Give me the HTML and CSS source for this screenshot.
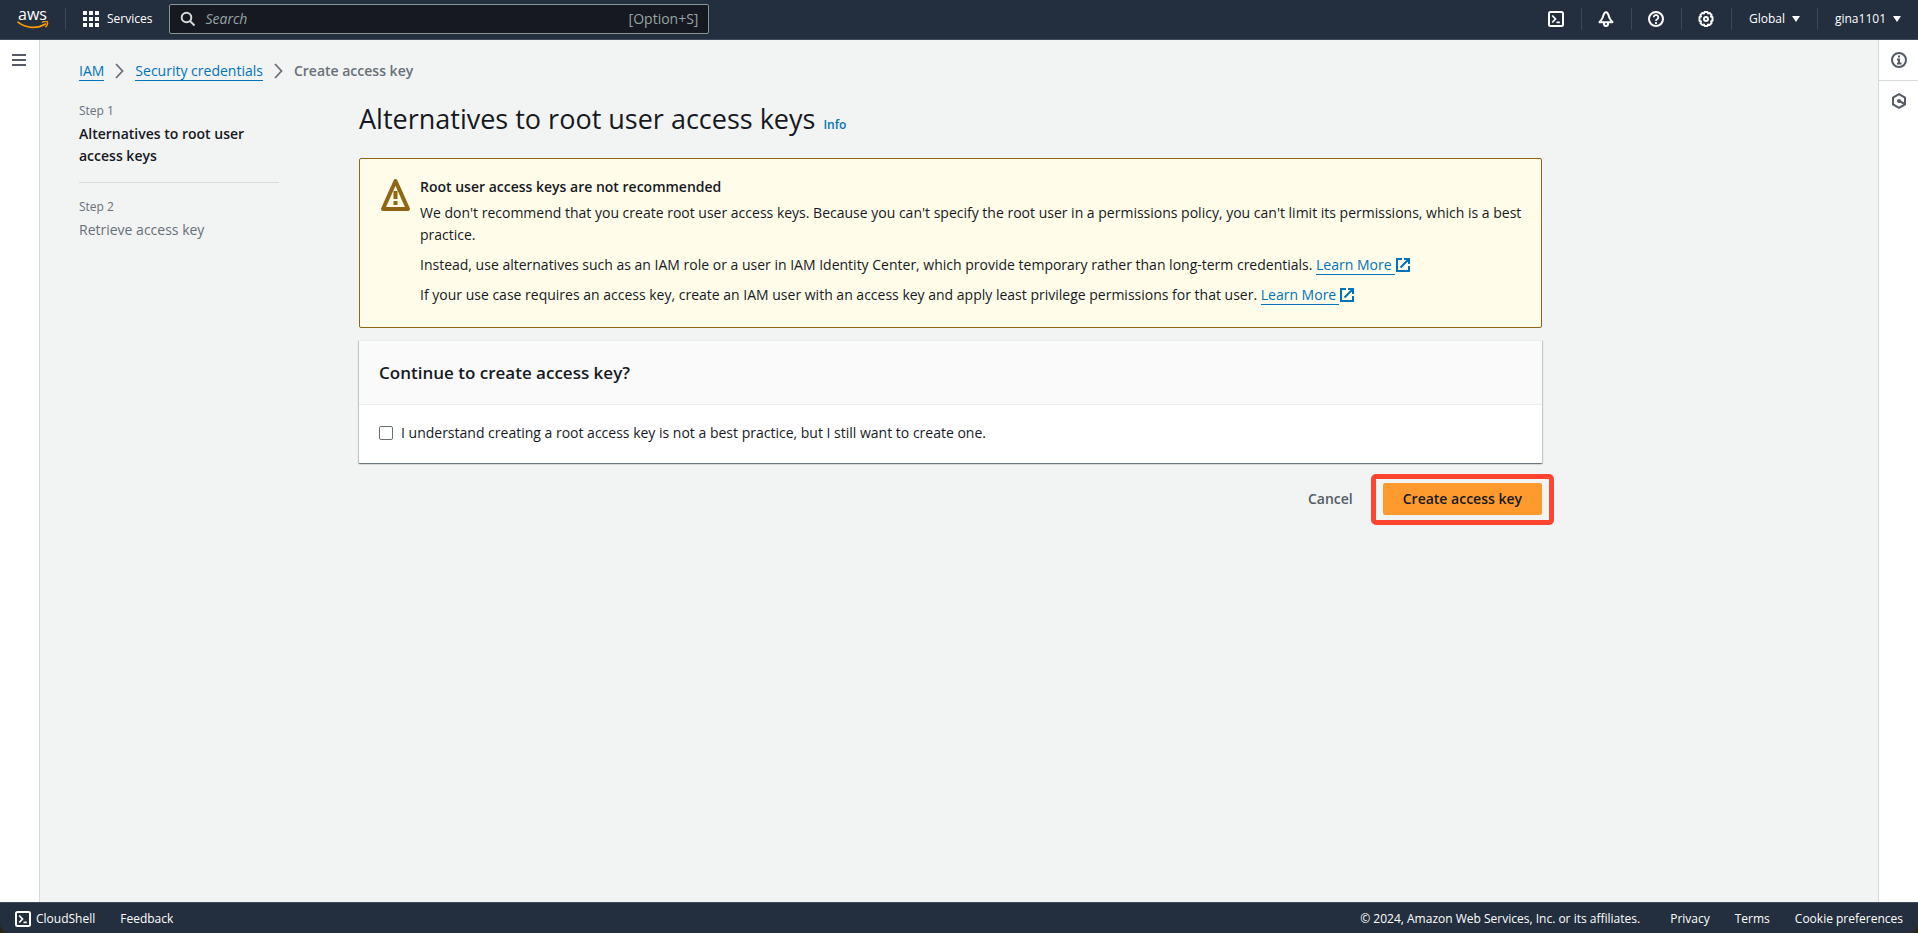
FILE: index.html
```html
<!DOCTYPE html>
<html lang="en">
<head>
<meta charset="utf-8">
<title>Create access key | IAM | Global</title>
<link rel="stylesheet" href="styles.css">
</head>
<body>
<header class="topbar">
  <a class="logo" href="#" aria-label="AWS home">
    <span class="logo-word">aws</span>
    <svg class="logo-smile" width="32" height="8" viewBox="0 0 32 8" fill="none" stroke="#ff9900" stroke-width="1.7" stroke-linecap="round"><path d="M1 1.2C9 7.6 20 8 28.6 3"/><path d="M25.4 1.2c2-.7 4.6-.9 5 0 .4.8-.2 3-1.6 4.6" stroke-width="1.4"/></svg>
  </a>
  <button class="services" type="button">
    <svg width="16" height="16" viewBox="0 0 16 16" fill="#fff"><path d="M0 0h4v4H0zM6 0h4v4H6zM12 0h4v4h-4zM0 6h4v4H0zM6 6h4v4H6zM12 6h4v4h-4zM0 12h4v4H0zM6 12h4v4H6zM12 12h4v4h-4z"/></svg>
    Services
  </button>
  <label class="search">
    <svg width="16" height="16" viewBox="0 0 16 16" fill="none" stroke="#d5dbdb" stroke-width="2"><circle cx="6.5" cy="6.5" r="4.8"/><path d="M10 10l4.5 4.5"/></svg>
    <input type="search" placeholder="Search" aria-label="Search">
    <span class="shortcut">[Option+S]</span>
  </label>
  <nav class="tools" aria-label="Tools">
    <button type="button" class="tool" aria-label="CloudShell"><svg width="16" height="16" viewBox="0 0 16 16" fill="none" stroke="#fff" stroke-width="2"><rect x="1" y="1" width="14" height="14" rx="1.5"/><path d="M4.2 4.5L7.5 8l-3.3 3.5M8.5 11.3h3.3" stroke-width="1.7"/></svg></button>
    <button type="button" class="tool" aria-label="Notifications"><svg width="16" height="16" viewBox="0 0 16 16" fill="none" stroke="#fff" stroke-width="2" stroke-linejoin="round"><path d="M8 1.3C6 1.3 5.3 4.5 4.7 6.5 4.1 8.5 2.3 9.8 1.5 11.3h13C13.7 9.8 11.9 8.5 11.3 6.5 10.7 4.5 10 1.3 8 1.3z"/><path d="M6 12v1a2 2 0 0 0 4 0v-1"/></svg></button>
    <button type="button" class="tool" aria-label="Help"><svg width="16" height="16" viewBox="0 0 16 16" fill="none" stroke="#fff" stroke-width="2"><circle cx="8" cy="8" r="7"/><path d="M5.7 6.3a2.3 2.3 0 1 1 3.5 2C8.3 8.8 8 9 8 10M8 11v1.9" stroke-width="1.8"/></svg></button>
    <button type="button" class="tool" aria-label="Settings"><svg width="16" height="16" viewBox="0 0 16 16" fill="none" stroke="#fff" stroke-width="2" stroke-linejoin="round"><path d="M6.6 1h2.8l.6 1.5 1.6-.6 2 2-.6 1.6 1.5.7v3.6l-1.5.7.6 1.6-2 2-1.6-.6-.6 1.5H6.6L6 13.500l-1.600.6-2-2 .6-1.600-1.500-.7V6.200L3 5.500l-.6-1.600 2-2 1.600.6z"/><circle cx="8" cy="8" r="2"/></svg></button>
    <button type="button" class="menu">Global <span class="caret"></span></button>
    <button type="button" class="menu">gina1101 <span class="caret"></span></button>
  </nav>
</header>

<div class="shell">
  <aside class="rail rail-left">
    <button type="button" class="rail-button" aria-label="Open navigation"><svg width="14" height="12" viewBox="0 0 14 12" fill="#545b64"><path d="M0 0h14v2H0zM0 5h14v2H0zM0 10h14v2H0z"/></svg></button>
  </aside>

  <main class="page">
    <nav class="crumbs" aria-label="Breadcrumb">
      <a href="#">IAM</a>
      <svg width="9" height="16" viewBox="0 0 9 16" fill="none" stroke="#687078" stroke-width="1.8"><path d="M1 1l6.5 7L1 15"/></svg>
      <a href="#">Security credentials</a>
      <svg width="9" height="16" viewBox="0 0 9 16" fill="none" stroke="#687078" stroke-width="1.8"><path d="M1 1l6.5 7L1 15"/></svg>
      <span class="crumb-current">Create access key</span>
    </nav>

    <div class="wizard">
      <ol class="steps">
        <li class="step step-active"><span class="step-label">Step 1</span><span class="step-name">Alternatives to root user access keys</span></li>
        <li class="step"><span class="step-label">Step 2</span><span class="step-name">Retrieve access key</span></li>
      </ol>

      <div class="content">
        <div class="title-row">
          <h1>Alternatives to root user access keys</h1>
          <a class="info" href="#">Info</a>
        </div>

        <section class="alert">
          <svg class="alert-icon" width="32" height="36" viewBox="0 0 32 36" fill="none" stroke="#906514"><path d="M15.5 5L28 33H3z" stroke-width="4" stroke-linejoin="round"/><path d="M15.5 15v8M15.5 25v4" stroke-width="4"/></svg>
          <div class="alert-body">
            <h2>Root user access keys are not recommended</h2>
            <p>We don't recommend that you create root user access keys. Because you can't specify the root user in a permissions policy, you can't limit its permissions, which is a best practice.</p>
            <p>Instead, use alternatives such as an IAM role or a user in IAM Identity Center, which provide temporary rather than long-term credentials. <a class="external" href="#"><span>Learn More</span><svg width="14" height="14" viewBox="0 0 14 14" fill="none" stroke="#0073bb" stroke-width="2"><path d="M6 1H1v12h12V8M8 1h5v5M13 1L4.5 9.5"/></svg></a></p>
            <p>If your use case requires an access key, create an IAM user with an access key and apply least privilege permissions for that user. <a class="external" href="#"><span>Learn More</span><svg width="14" height="14" viewBox="0 0 14 14" fill="none" stroke="#0073bb" stroke-width="2"><path d="M6 1H1v12h12V8M8 1h5v5M13 1L4.5 9.5"/></svg></a></p>
          </div>
        </section>

        <section class="panel">
          <h2 class="panel-title">Continue to create access key?</h2>
          <label class="consent"><input type="checkbox"><span>I understand creating a root access key is not a best practice, but I still want to create one.</span></label>
        </section>

        <div class="actions">
          <button type="button" class="cancel">Cancel</button>
          <button type="button" class="primary">Create access key</button>
        </div>
      </div>
    </div>
  </main>

  <aside class="rail rail-right">
    <button type="button" class="rail-button" aria-label="Info panel"><svg width="16" height="16" viewBox="0 0 16 16" fill="none" stroke="#545b64" stroke-width="2"><circle cx="8" cy="8" r="7"/><path d="M7 4.5h2M6 7.5h2V11M6 11.5h4.5"/></svg></button>
    <button type="button" class="rail-button" aria-label="Diagnostics"><svg width="16" height="16" viewBox="0 0 16 16" fill="none" stroke="#545b64" stroke-width="2"><path d="M8 1.2l6 3.4v6.8l-6 3.4-6-3.4V4.6z"/><circle cx="8" cy="8" r="2" fill="#545b64" stroke="none"/><path d="M8 8l5 2.5"/></svg></button>
  </aside>
</div>

<footer class="footer">
  <a class="cloudshell" href="#"><svg width="16" height="16" viewBox="0 0 16 16" fill="none" stroke="#fff" stroke-width="2"><rect x="1" y="1" width="14" height="14" rx="1.5"/><path d="M4.2 4.5L7.5 8l-3.3 3.5M8.5 11.3h3.3" stroke-width="1.7"/></svg>CloudShell</a>
  <a href="#">Feedback</a>
  <span class="copyright">© 2024, Amazon Web Services, Inc. or its affiliates.</span>
  <a class="legal" href="#">Privacy</a>
  <a class="legal" href="#">Terms</a>
  <a class="legal" href="#">Cookie preferences</a>
</footer>
</body>
</html>
```
FILE: styles.css
```css
* { box-sizing: border-box; }

body {
  margin: 0;
  min-height: 100vh;
  display: flex;
  flex-direction: column;
  background: #2b260f;
  color: #16191f;
  font: 14px/22px "Open Sans", "Noto Sans", sans-serif;
}

button { font: inherit; border: 0; padding: 0; background: none; cursor: pointer; }
svg { flex: none; display: block; }
h1, h2, p, ol { margin: 0; padding: 0; }
a { color: #0073bb; text-decoration: none; }

.topbar {
  display: flex;
  align-items: center;
  height: 40px;
  padding-bottom: 1px;
  background: #232f3e;
  border-bottom: 1px solid #414d5c;
  color: #fff;
  font-size: 12px;
  font-weight: 500;
}
.topbar button { color: #fff; }
.logo {
  width: 66px;
  height: 22px;
  padding-left: 17px;
  border-right: 1px solid #414750;
  color: #fff;
}
.logo-word { display: block; width: 31px; font-size: 16px; line-height: 13px; text-align: center; }
.services { display: flex; align-items: center; gap: 8px; padding: 0 17px; }
.search {
  display: flex;
  align-items: center;
  width: 540px;
  height: 30px;
  padding: 0 10px;
  gap: 9px;
  border: 1px solid #879596;
  border-radius: 2px;
  background: #16191f;
  color: #95a5a6;
  font-size: 14px;
  font-weight: 400;
}
.search input {
  flex: 1;
  min-width: 0;
  border: 0;
  padding: 0;
  outline: 0;
  background: none;
  color: #fff;
  font: inherit;
}
.search input::placeholder { color: #95a5a6; font-style: italic; opacity: 1; }
.tools { display: flex; margin-left: auto; }
.tool, .menu { display: flex; align-items: center; justify-content: center; height: 22px; }
.tool { width: 50px; border-right: 1px solid #414750; }
.menu { gap: 7px; padding: 0 17px; }
.menu + .menu { border-left: 1px solid #414750; }
.caret { border: 4px solid transparent; border-top: 6px solid #fff; border-bottom: 0; }

.shell { flex: 1; display: flex; background: #f2f3f3; }
.rail { width: 40px; background: #fff; }
.rail-left { border-right: 1px solid #d5dbdb; }
.rail-right { border-left: 1px solid #d5dbdb; }
.rail-button { display: flex; align-items: center; justify-content: center; width: 100%; height: 40px; }
.rail-left .rail-button { width: 38px; }
.rail-right .rail-button:first-child { height: 41px; border-bottom: 1px solid #d5dbdb; }

.page { flex: 1; padding: 20px 39px; }
.crumbs { display: flex; align-items: center; gap: 11px; }
.crumbs a { line-height: 19px; border-bottom: 1px solid #0073bb; }
.crumb-current { color: #687078; font-weight: 600; }

.wizard { display: grid; grid-template-columns: 200px minmax(0, 1fr); gap: 80px; max-width: 1463px; margin-top: 17px; }
.steps { list-style: none; color: #687078; }
.step + .step { margin-top: 15px; padding-top: 12px; border-top: 1px solid #d5dbdb; }
.step-label, .step-name { display: block; }
.step-label { font-size: 12px; line-height: 24px; }
.step-active .step-name { color: #16191f; font-weight: 600; }

.title-row { display: flex; align-items: baseline; gap: 8px; margin-top: 2px; }
h1 { font-size: 27px; line-height: 36px; font-weight: 400; }
.info { font-size: 12px; font-weight: 600; }

.alert {
  display: flex;
  gap: 8px;
  margin-top: 21px;
  padding: 17px 10px 13px 20px;
  border: 1px solid #906514;
  border-radius: 2px;
  background: #fffce9;
}
.alert h2 { font-size: 14px; line-height: 22px; font-weight: 600; margin-bottom: 4px; }
.alert p { margin-bottom: 8px; }
.external { display: inline-flex; align-items: center; gap: 1px; }
.external span { line-height: 19px; padding-right: 3px; border-bottom: 1px solid #0073bb; }

.panel {
  margin-top: 12px;
  background: #fff;
  border-top: 1px solid #eaeded;
  box-shadow: 0 1px 1px rgba(0, 28, 36, .4), 1px 1px 1px rgba(0, 28, 36, .15), -1px 1px 1px rgba(0, 28, 36, .15);
}
.panel-title { padding: 20px; font-size: 17px; line-height: 23px; font-weight: 600; background: #fafafa; border-bottom: 1px solid #eaeded; }
.consent { display: flex; align-items: center; gap: 8px; padding: 17px 20px 19px; }
.consent input { appearance: none; width: 14px; height: 14px; margin: 0; border: 1px solid #687078; border-radius: 2px; background: #fff; }

.actions { display: flex; justify-content: flex-end; gap: 30px; margin-top: 20px; font-weight: 600; }
.cancel { color: #545b64; }
.primary { position: relative; padding: 5px 20px; border-radius: 2px; background: #ff9a2e; color: #16191f; }
.primary::after { content: ""; position: absolute; inset: -9px -12px -10px; border: 5px solid #ff452f; border-radius: 5px; }

.footer {
  display: flex;
  align-items: center;
  gap: 25px;
  height: 31px;
  padding: 1px 15px 0;
  border-top: 1px solid #414d5c;
  border-radius: 0 0 9px 9px;
  background: #232f3e;
  color: #fff;
  font-size: 12px;
  font-weight: 500;
}
.footer a { color: #fff; }
.cloudshell { display: flex; align-items: center; gap: 5px; }
.copyright { margin-left: auto; margin-right: 5px; }
```
